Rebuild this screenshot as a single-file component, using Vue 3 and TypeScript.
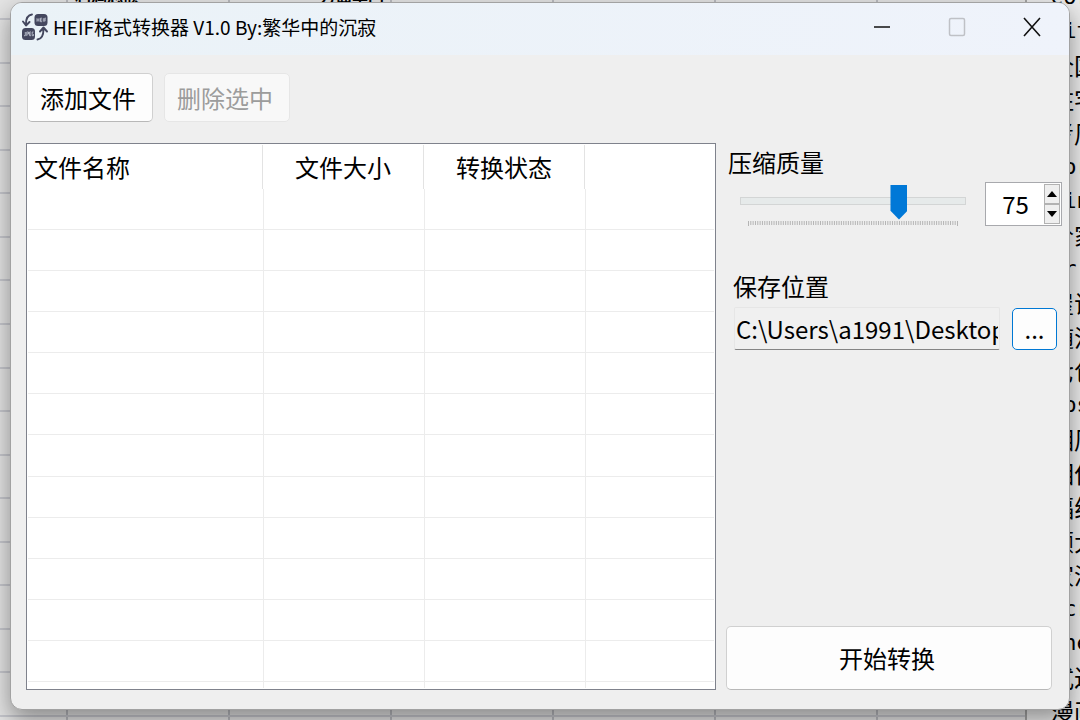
<script setup lang="ts">
import { ref } from 'vue'

const quality = ref<number>(75)
const minQuality = 10
const maxQuality = 100
const savePath = ref<string>('C:\\Users\\a1991\\Desktop')

const ticks = Array.from({ length: maxQuality - minQuality + 1 }, (_, i) => i)
const tickPath = ticks
  .map((i) => `M${((i * 209) / 90 + 0.5).toFixed(2)} 0v${i === 0 || i === 90 ? 5 : 4}`)
  .join('')

function step(delta: number): void {
  quality.value = Math.min(maxQuality, Math.max(minQuality, Number(quality.value) + delta))
}

interface NoteLine {
  text: string
  mono?: boolean
}

const notes: NoteLine[] = [
  { text: 'cor', mono: true },
  { text: 'git', mono: true },
  { text: '全国' },
  { text: '住宅' },
  { text: '考周' },
  { text: 'for', mono: true },
  { text: 'min', mono: true },
  { text: '价家' },
  { text: 'br:', mono: true },
  { text: '屋试' },
  { text: '随流' },
  { text: '七包' },
  { text: 'aps', mono: true },
  { text: '相周' },
  { text: '相作' },
  { text: '福线' },
  { text: '颜大' },
  { text: '家派' },
  { text: 'scr', mono: true },
  { text: 'the', mono: true },
  { text: '式过' },
  { text: '漫画' },
]
</script>

<template>
  <div class="desktop">
    <div class="backdrop" aria-hidden="true">
      <div class="sheet">
        <div class="sheet-head"><span>利润总额</span><span class="second">方面单门</span></div>
        <div v-for="n in 16" :key="n" class="sheet-row"></div>
        <div class="sheet-foot"></div>
      </div>
      <div class="notes">
        <div v-for="(line, i) in notes" :key="i" class="note" :class="{ mono: line.mono }">{{ line.text }}</div>
      </div>
    </div>

    <main class="window">
      <header class="titlebar">
        <svg class="logo" viewBox="0 0 26 28" aria-hidden="true">
          <rect x="12.500" y="1" width="13" height="12" rx="3.500" fill="#44475e" />
          <rect x="0" y="15" width="13" height="12" rx="3.500" fill="#44475e" />
          <path d="M15 5.200v3.500M15 7h2M17 5.200v3.500M20 5.200h-1.500v3.500H20M18.500 7H20M21.300 5.200v3.500M24 5.200h-1.300v3.500M22.700 7H24" fill="none" stroke="#c9cedb" stroke-width=".8" />
          <path d="M3.300 19v3.700H2M4.800 23v-4h1.700v2H4.800M9 19H7.600v3.700H9M7.600 21H9M11.500 19h-1.300v3.700h1.300v-1.500" fill="none" stroke="#c9cedb" stroke-width=".8" />
          <path d="M10 1.500C6 2 4 5 4 11M1 8.500l3 4 3.500-3.500M15.500 26.500c4.500-.5 6-4 6-10.500M18 18.500l3.500-4 3.500 4" fill="none" stroke="#44475e" stroke-width="1.900" stroke-linecap="round" stroke-linejoin="round" />
        </svg>
        <h1>HEIF格式转换器 V1.0 By:繁华中的沉寂</h1>
        <div class="captions">
          <button type="button" aria-label="最小化">
            <svg viewBox="0 0 18 20"><path d="M1 10h16" stroke="#111" stroke-width="1.500" /></svg>
          </button>
          <button type="button" aria-label="最大化" disabled>
            <svg viewBox="0 0 18 20"><rect x="1.500" y="1.500" width="15" height="17" rx="1.500" fill="none" stroke="#bfc1c6" stroke-width="1.500" /></svg>
          </button>
          <button type="button" aria-label="关闭">
            <svg viewBox="0 0 18 20"><path d="M1 1l16 18M17 1L1 19" stroke="#111" stroke-width="1.600" /></svg>
          </button>
        </div>
      </header>

      <div class="content">
        <div class="toolbar">
          <button type="button" class="btn">添加文件</button>
          <button type="button" class="btn" disabled>删除选中</button>
        </div>

        <div class="panes">
          <div class="list">
            <table>
              <colgroup>
                <col class="c-name" />
                <col class="c-size" />
                <col class="c-state" />
                <col />
              </colgroup>
              <thead>
                <tr>
                  <th scope="col" class="first">文件名称</th>
                  <th scope="col">文件大小</th>
                  <th scope="col">转换状态</th>
                  <td></td>
                </tr>
              </thead>
              <tbody>
                <tr v-for="n in 12" :key="n">
                  <td v-for="c in 4" :key="c"></td>
                </tr>
                <tr class="rest">
                  <td v-for="c in 4" :key="c"></td>
                </tr>
              </tbody>
            </table>
          </div>

          <section class="side">
            <label class="caption" for="quality">压缩质量</label>
            <div class="quality">
              <div class="slider">
                <input id="quality" v-model.number="quality" type="range" :min="minQuality" :max="maxQuality" />
                <svg class="ticks" viewBox="0 0 210 5" preserveAspectRatio="none" aria-hidden="true">
                  <path :d="tickPath" stroke="#b4b4b4" stroke-width="1" />
                </svg>
              </div>
              <div class="spin">
                <input v-model.number="quality" type="number" :min="minQuality" :max="maxQuality" aria-label="压缩质量数值" />
                <div class="arrows">
                  <button type="button" aria-label="增加" @click="step(1)">
                    <svg viewBox="0 0 10 6"><path d="M0 6L5 0l5 6z" /></svg>
                  </button>
                  <button type="button" aria-label="减少" @click="step(-1)">
                    <svg viewBox="0 0 10 6"><path d="M0 0l5 6 5-6z" /></svg>
                  </button>
                </div>
              </div>
            </div>

            <label class="caption save" for="path">保存位置</label>
            <div class="path">
              <input id="path" v-model="savePath" type="text" readonly />
              <button type="button" class="browse" aria-label="浏览">...</button>
            </div>

            <button type="button" class="btn start">开始转换</button>
          </section>
        </div>
      </div>
    </main>
  </div>
</template>

<style>
body {
  margin: 0;
}
</style>

<style scoped>
* {
  box-sizing: border-box;
}

.desktop {
  position: relative;
  height: 100vh;
  min-height: 480px;
  padding: 2px 10px 10px;
  overflow: hidden;
  background: #e4e4e4;
  color: #000;
  font-family: "Noto Sans CJK SC", "Noto Sans", sans-serif;
  font-size: 24px;
  line-height: 32px;
}

.backdrop {
  position: absolute;
  inset: 0;
  display: flex;
}

.sheet {
  flex: 1;
  display: flex;
  flex-direction: column;
  background: repeating-linear-gradient(90deg, transparent 0 160px, #b9babf 160px 162px) -94px 0 / 2000px 100%;
}

.sheet-head {
  display: flex;
  align-items: flex-end;
  height: 20px;
  padding-left: 75px;
  border-bottom: 2px solid #c6c7cd;
  font-size: 16px;
  font-weight: 700;
  line-height: 16px;
}

.sheet-head span {
  margin-bottom: 15px;
}

.sheet-head .second {
  margin-left: 181px;
}

.sheet-row {
  flex: 1;
  border-bottom: 2px solid #c6c7cd;
}

.sheet-foot {
  height: 3px;
}

.notes {
  width: 55px;
  padding-left: 23px;
  margin-top: -20px;
  border-left: 2px solid #a5a5a5;
  background: #ebebeb;
}

.note {
  height: 34px;
  line-height: 34px;
  white-space: nowrap;
}

.note.mono {
  font-family: "DejaVu Sans Mono", monospace;
  font-size: 22px;
}

.window {
  position: relative;
  display: flex;
  flex-direction: column;
  height: 100%;
  overflow: hidden;
  border: 1px solid #a2a2a2;
  border-radius: 12px;
  background: #efefef;
  box-shadow: 0 10px 24px rgba(0, 0, 0, 0.4);
}

.titlebar {
  display: flex;
  align-items: center;
  height: 52px;
  padding: 0 27px 4px 11px;
  background: linear-gradient(90deg, #eaf2f7, #eff3fb);
}

.logo {
  width: 26px;
  height: 28px;
}

h1 {
  flex: 1;
  margin: 0 0 0 5px;
  font-size: 19px;
  font-weight: 400;
  line-height: 28px;
  white-space: nowrap;
}

.captions {
  display: flex;
  gap: 55px;
}

.captions button {
  display: flex;
  padding: 0;
  border: 0;
  background: none;
}

.captions svg {
  width: 20px;
  height: 20px;
}

.content {
  flex: 1;
  display: flex;
  flex-direction: column;
  gap: 21px;
  min-height: 0;
  padding: 18px 7px 19px 15px;
}

.toolbar {
  display: flex;
  gap: 11px;
  padding-left: 1px;
}

.btn {
  height: 49px;
  padding: 0 16px 0 12px;
  border: 1px solid #d0d0d0;
  border-bottom-color: #b8b8b8;
  border-radius: 5px;
  background: #fdfdfd;
  color: #000;
  font: inherit;
}

.btn:disabled {
  border-color: #e6e6e6;
  background: #f8f8f8;
  color: #9c9c9c;
}

.panes {
  flex: 1;
  display: grid;
  grid-template-columns: minmax(0, 690fr) minmax(0, 336fr);
  gap: 10px;
  min-height: 0;
}

.list {
  padding: 1px;
  border: 1px solid #7f828c;
  background: #fff;
}

table {
  width: 100%;
  height: 100%;
  table-layout: fixed;
  border-collapse: separate;
  border-spacing: 0;
}

.c-name {
  width: 235px;
}

.c-size,
.c-state {
  width: 161px;
}

thead tr {
  height: 44px;
}

th {
  padding: 0;
  border-right: 1px solid #e3e3e3;
  font-weight: 400;
  line-height: 32px;
}

th.first {
  padding-left: 6px;
  text-align: left;
}

td {
  padding: 0;
}

tbody td {
  border-bottom: 1px solid #ececec;
}

tbody td + td {
  border-left: 1px solid #ececec;
}

.rest {
  height: 6px;
}

.rest td {
  border-bottom: 0;
}

.side {
  display: flex;
  flex-direction: column;
}

.caption {
  align-self: flex-start;
  margin: 3px 0 0 2px;
}

.caption.save {
  margin: 44px 0 0 7px;
}

.quality {
  display: flex;
  align-items: flex-start;
  gap: 19px;
  margin-top: 4px;
  padding-left: 14px;
}

.slider {
  flex: 1;
  min-width: 0;
  padding-top: 1px;
}

.slider input {
  display: block;
  width: 100%;
  height: 35px;
  margin: 0;
  appearance: none;
  background: none;
}

.slider input::-webkit-slider-runnable-track {
  height: 8px;
  border: 1px solid #d3d5d5;
  background: #e6eaea;
}

.slider input::-webkit-slider-thumb {
  width: 17px;
  height: 35px;
  margin-top: -13px;
  appearance: none;
  background: #0078d7;
  clip-path: polygon(0 0, 100% 0, 100% 75%, 50% 100%, 0 75%);
}

.ticks {
  display: block;
  width: calc(100% - 16px);
  height: 5px;
  margin: 3px 8px 0;
}

.spin {
  display: flex;
  width: 77px;
  height: 44px;
  padding: 1px;
  border: 1px solid #a8a9ad;
  background: #fff;
}

.spin input {
  flex: 1;
  min-width: 0;
  padding: 0;
  border: 0;
  background: none;
  font: inherit;
  text-align: center;
  appearance: textfield;
}

.spin input::-webkit-inner-spin-button {
  display: none;
}

.arrows {
  display: flex;
  flex-direction: column;
  width: 16px;
}

.arrows button {
  flex: 1;
  display: flex;
  align-items: center;
  justify-content: center;
  padding: 0;
  border: 1px solid #b2b2b2;
  background: #efefef;
}

.arrows svg {
  width: 10px;
  height: 6px;
}

.path {
  display: flex;
  gap: 12px;
  margin-top: 5px;
  padding: 0 5px 0 8px;
}

.path input {
  flex: 1;
  min-width: 0;
  height: 43px;
  padding: 0 1px;
  border: 1px solid #e6e6e6;
  border-bottom-color: #858585;
  border-radius: 2px;
  background: #f0f0f0;
  color: #000;
  font: inherit;
}

.browse {
  width: 45px;
  height: 42px;
  margin-top: 1px;
  padding: 0;
  border: 1px solid #0078d4;
  border-radius: 5px;
  background: #fdfdfd;
  color: #000;
  font: inherit;
}

.start {
  height: 64px;
  margin: auto 10px 0 0;
}
</style>
